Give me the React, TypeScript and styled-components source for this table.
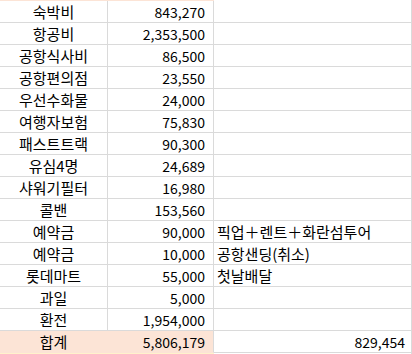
import styled, { createGlobalStyle } from "styled-components";

const GlobalStyle = createGlobalStyle`
  html, body {
    margin: 0;
    padding: 0;
    background: #ffffff;
  }
  body {
    font-family: "Noto Sans CJK KR", "Noto Sans", sans-serif;
    color: #000000;
  }
`;

type Item = {
  name: string
  amount: string
  memo?: string
}

const items: Item[] = [
  { name: "숙박비", amount: "843,270" },
  { name: "항공비", amount: "2,353,500" },
  { name: "공항식사비", amount: "86,500" },
  { name: "공항편의점", amount: "23,550" },
  { name: "우선수화물", amount: "24,000" },
  { name: "여행자보험", amount: "75,830" },
  { name: "패스트트랙", amount: "90,300" },
  { name: "유심4명", amount: "24,689" },
  { name: "샤워기필터", amount: "16,980" },
  { name: "콜밴", amount: "153,560" },
  { name: "예약금", amount: "90,000", memo: "픽업＋렌트＋화란섬투어" },
  { name: "예약금", amount: "10,000", memo: "공항샌딩(취소)" },
  { name: "롯데마트", amount: "55,000", memo: "첫날배달" },
  { name: "과일", amount: "5,000" },
  { name: "환전", amount: "1,954,000" },
];

const App = () => {
  return (
    <>
      <GlobalStyle />
      <Sheet>
        <Strip>
          <StripCell $fill="#fce4d6" />
          <StripCell $fill="#fce4d6" />
          <StripCell />
        </Strip>
        {items.map((item, i) => (
          <Row key={i}>
            <Cell $align="center">{item.name}</Cell>
            <Cell $align="right">{item.amount}</Cell>
            <Cell $align="left">{item.memo}</Cell>
          </Row>
        ))}
        <Row>
          <Cell $align="center" $fill="#fce4d6" $noRight>합계</Cell>
          <Cell $align="right" $fill="#fce4d6">5,806,179</Cell>
          <Cell $align="right" $tight>829,454</Cell>
        </Row>
        <Strip $tall>
          <StripCell $fill="#fff2cc" />
          <StripCell $fill="#fff2cc" />
          <StripCell />
        </Strip>
      </Sheet>
    </>
  )
}

export default App;

const Sheet = styled.div`
  width: 412px;
  display: flex;
  flex-direction: column;
`;

const Row = styled.div`
  display: grid;
  grid-template-columns: 108px 106px 198px;
  height: 22px;
`;

const Strip = styled.div<{ $tall?: boolean }>`
  display: grid;
  grid-template-columns: 108px 106px 198px;
  height: ${p => (p.$tall ? "2px" : "1px")};
`;

const StripCell = styled.div<{ $fill?: string }>`
  background: ${p => p.$fill || "#ffffff"};
  border-right: 1px solid ${p => (p.$fill ? p.$fill : "#dadada")};
  &:last-child {
    border-right-color: #dadada;
  }
`;

const Cell = styled.div<{
  $align: "left" | "center" | "right"
  $fill?: string
  $noRight?: boolean
  $tight?: boolean
}>`
  box-sizing: border-box;
  height: 22px;
  display: flex;
  align-items: center;
  justify-content: ${p =>
    p.$align === "center" ? "center" : p.$align === "right" ? "flex-end" : "flex-start"};
  padding: ${p =>
    p.$align === "right" ? (p.$tight ? "0 6px 0 0" : "0 8px 0 0") : p.$align === "left" ? "0 0 0 3px" : "0"};
  background: ${p => p.$fill || "#ffffff"};
  border-bottom: 1px solid ${p => p.$fill || "#dadada"};
  border-right: 1px solid ${p => (p.$noRight && p.$fill ? p.$fill : "#dadada")};
  font-size: ${p => (p.$align === "right" ? "14px" : "15px")};
  line-height: 1;
  white-space: nowrap;
  overflow: hidden;
`;
